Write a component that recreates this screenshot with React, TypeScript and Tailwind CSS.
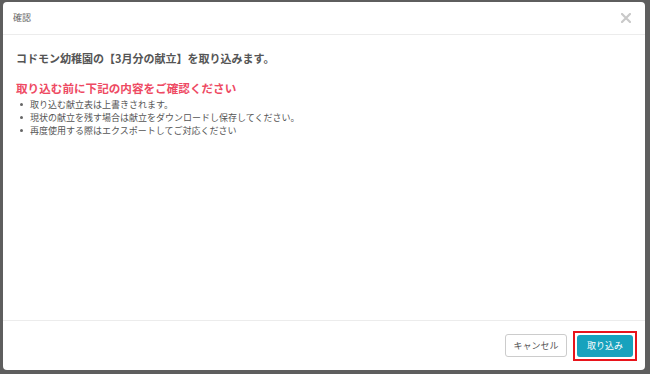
import React from "react";

const font = { fontFamily: '"Noto Sans CJK JP", "Noto Sans", sans-serif' };

export default function App() {
  return (
    <div
      className="w-[650px] h-[374px] bg-[#5e5e5e] pl-[3px] pt-[2px] pr-[5px] pb-[4px]"
      style={font}
    >
      <div className="w-[642px] h-[368px] bg-white rounded-[4px] flex flex-col">
        <div className="h-[33px] border-b border-[#ececec] flex items-center justify-between pl-[10px] pr-[14px]">
          <span className="text-[9px] text-[#666]">確認</span>
          <svg width="10" height="10" viewBox="0 0 10 10">
            <path d="M1 1 L9 9 M9 1 L1 9" stroke="#c9c9c9" strokeWidth="2.2" strokeLinecap="square" />
          </svg>
        </div>
        <div className="flex-1 pl-[13px] pr-[13px] pt-[14px]">
          <div className="text-[11px] font-bold text-[#555] leading-[18px]">
            コドモン幼稚園の【3月分の献立】を取り込みます。
          </div>
          <div className="mt-[12px] text-[11.6px] font-bold text-[#ee4a63] leading-[18px]">
            取り込む前に下記の内容をご確認ください
          </div>
          <ul className="mt-[1px] text-[9px] text-[#555] leading-[13px]">
            {[
              "取り込む献立表は上書きされます。",
              "現状の献立を残す場合は献立をダウンロードし保存してください。",
              "再度使用する際はエクスポートしてご対応ください",
            ].map((t) => (
              <li key={t} className="flex items-center">
                <span className="w-[3px] h-[3px] rounded-full bg-[#666] ml-[4px] mr-[7px]" />
                {t}
              </li>
            ))}
          </ul>
        </div>
        <div className="h-[50px] border-t border-[#ececec] flex items-center justify-end pr-[8px] gap-[6px]">
          <button className="w-[62px] h-[23px] border border-[#ccc] rounded-[3px] bg-white text-[9px] text-[#555]">
            キャンセル
          </button>
          <div className="border-2 border-[#e8141b] p-[2px]">
            <button className="w-[56px] h-[22px] rounded-[3px] bg-[#17a2bd] text-[9px] text-white block">
              取り込み
            </button>
          </div>
        </div>
      </div>
    </div>
  );
}
